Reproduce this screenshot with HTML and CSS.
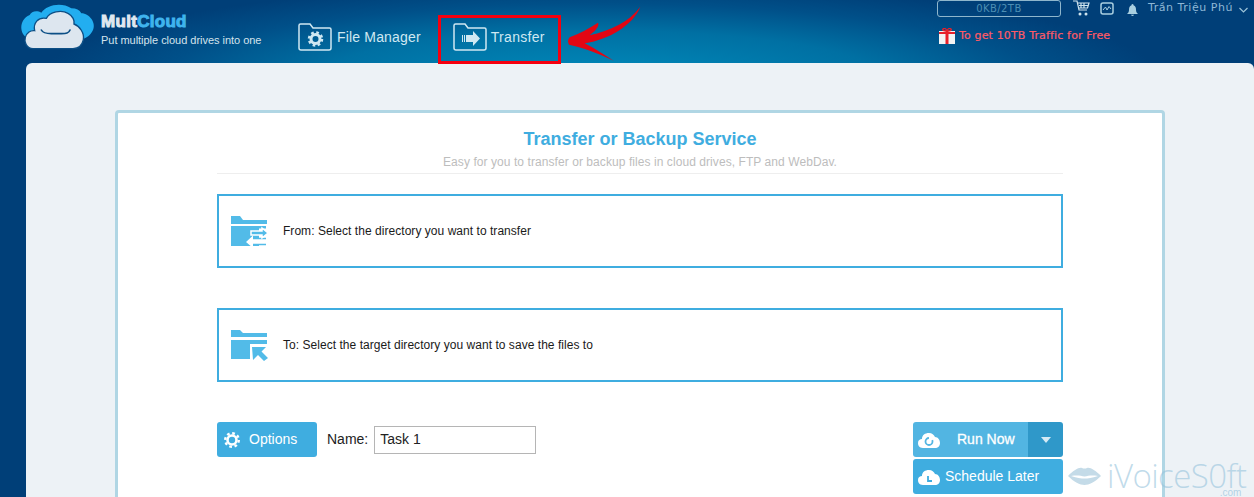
FILE: index.html
```html
<!DOCTYPE html>
<html lang="en">
<head>
    <meta charset="UTF-8">
    <meta name="viewport" content="width=device-width, initial-scale=1.0">
    <title>MultCloud Transfer</title>
    <link rel="stylesheet" href="styles.css">
</head>
<body>

<div class="header">
    <div class="logo">
        <svg class="logo-cloud" width="80" height="54" viewBox="0 0 240 162">
            <path d="M30 115 C5 105 0 60 35 45 C40 35 55 30 70 38 C85 15 130 5 160 25 C175 25 185 30 190 40 C215 40 235 70 225 90 C218 105 205 115 190 118 Z" fill="#22aef0"/>
            <path d="M45 146 C25 146 18 125 22 112 C26 98 38 90 50 92 C45 70 60 50 85 55 C95 35 130 28 150 40 C165 48 170 62 168 72 C185 78 200 100 196 120 C192 138 180 146 165 146 Z" fill="#dde6ef" stroke="#0c4f86" stroke-width="4"/>
            <path d="M70 90 C75 100 85 101 100 101 H130 C145 101 152 100 156 90" fill="none" stroke="#0c4f86" stroke-width="5" stroke-linecap="round"/>
        </svg>
        <div class="logo-text">
            <div class="logo-name">Mult<span class="logo-name-blue">Cloud</span></div>
            <div class="logo-slogan">Put multiple cloud drives into one</div>
        </div>
    </div>

    <div class="nav">
        <a class="nav-item">
            <svg width="34" height="28" viewBox="0 0 34 28">
                <path d="M1 25 V2.500 Q1 1 2.500 1 H12 L15 5 H31.500 Q33 5 33 6.500 V25 Q33 27 31 27 H3 Q1 27 1 25 Z" fill="none" stroke="#cfe8f2" stroke-width="1.500"/>
                <circle cx="17.500" cy="16" r="4.500" fill="none" stroke="#cfe8f2" stroke-width="3"/>
                <circle cx="17.500" cy="16" r="6.500" fill="none" stroke="#cfe8f2" stroke-width="2.500" stroke-dasharray="2.600 2.500"/>
            </svg>
            File Manager
        </a>
        <a class="nav-item nav-transfer">
            <svg width="34" height="28" viewBox="0 0 34 28">
                <path d="M1 25 V2.500 Q1 1 2.500 1 H12 L15 5 H31.500 Q33 5 33 6.500 V25 Q33 27 31 27 H3 Q1 27 1 25 Z" fill="none" stroke="#cfe8f2" stroke-width="1.500"/>
                <path d="M9 12 H10 V19 H9 Z M11 12 H12 V19 H11 Z M13 12 H20 V8 L27 15.500 L20 23 V19 H13 Z" fill="#cfe8f2"/>
            </svg>
            Transfer
        </a>
    </div>

    <div class="user-area">
        <div class="user-top">
            <div class="traffic">0KB/2TB</div>
            <svg class="cart" width="17" height="16" viewBox="0 0 17 16">
                <path d="M0 1 H4 L6 10 H14 M4.500 3 H16 L14.500 8 H5.500 M6 5.500 H15 M8 3 V8 M11 3 V8" fill="none" stroke="#cfe4ee" stroke-width="1.200"/>
                <circle cx="7" cy="14" r="1.500" fill="#cfe4ee"/>
                <circle cx="13" cy="14" r="1.500" fill="#cfe4ee"/>
            </svg>
            <svg class="stats" width="14" height="13" viewBox="0 0 14 13">
                <rect x="1" y="1" width="12" height="11" rx="2" fill="none" stroke="#a9cfe0" stroke-width="1.500"/>
                <path d="M3 8 L5.500 5 L7 8 L9 4.500 L11 7" fill="none" stroke="#a9cfe0" stroke-width="1"/>
            </svg>
            <svg class="bell" width="11" height="12" viewBox="0 0 11 12">
                <path d="M5.500 0 C6.500 0 6.500 1 6.500 1.200 C8.500 2 9 3.500 9 6 C9 8 10 9 11 10 H0 C1 9 2 8 2 6 C2 3.500 2.500 2 4.500 1.200 C4.500 1 4.500 0 5.500 0 Z M4 10.800 H7 C7 12.300 4 12.300 4 10.800 Z" fill="#a9cfe0"/>
            </svg>
            <span class="user-name">Trần Triệu Phú</span>
            <svg class="caret" width="9" height="6" viewBox="0 0 9 6">
                <path d="M.5 1 L4.500 5 L8.500 1" fill="none" stroke="#9cc4d8" stroke-width="1.200"/>
            </svg>
        </div>
        <div class="promo">
            <svg width="16" height="16" viewBox="0 0 16 16">
                <rect x="0" y="3" width="16" height="13" fill="#f3f3f3"/>
                <rect x="6.500" y="2" width="3" height="14" fill="#e8202a"/>
                <rect x="0" y="4" width="16" height="2" fill="#e8202a"/>
                <path d="M8 3 C4 3 3 2 4 1 C5 0 7 0 8 3 C9 0 11 0 12 1 C13 2 12 3 8 3 Z" fill="none" stroke="#e8202a" stroke-width="1.200"/>
            </svg>
            To get 10TB Traffic for Free
        </div>
    </div>
</div>

<div class="panel">
    <div class="card">
        <div class="card-head">
            <h1>Transfer or Backup Service</h1>
            <p>Easy for you to transfer or backup files in cloud drives, FTP and WebDav.</p>
        </div>

        <div class="dir-box">
            <svg width="37" height="30" viewBox="0 0 37 30">
                <path d="M0 0 H9 L12 4 H36 V8 H0 Z M0 10 H35 V12.500 H0 Z" fill="#52bbe8"/>
                <path d="M0 10 H28 V30 H0 Z" fill="#52bbe8"/>
                <path d="M15 26 L22 19.500 V22.500 H35 V28.500 H22 V32 Z" fill="#fff"/>
                <path d="M22 22.500 H35 M22 28.500 H35" fill="none" stroke="#52bbe8" stroke-width="1.500"/>
                <path d="M20 15 H31 V12 L37 17 L31 22 V19 H20 Z" fill="#52bbe8" stroke="#fff" stroke-width="1.500"/>
            </svg>
            <span>From: Select the directory you want to transfer</span>
        </div>

        <div class="dir-box">
            <svg width="37" height="31" viewBox="0 0 37 31">
                <path d="M0 0 H9 L12 3 H36 V7 H0 Z" fill="#52bbe8"/>
                <path d="M0 10 H36 V14 H19 V29 H0 Z" fill="#52bbe8"/>
                <path d="M21 17 H35 L30.500 21.500 L37 28 L33 31 L27 25 L22 30 Z" fill="#52bbe8"/>
            </svg>
            <span>To: Select the target directory you want to save the files to</span>
        </div>

        <div class="actions">
            <div class="actions-left">
                <button class="btn btn-options">
                    <svg width="16" height="16" viewBox="0 0 16 16">
                        <circle cx="8" cy="8" r="4.500" fill="none" stroke="#fff" stroke-width="2.600"/>
                        <circle cx="8" cy="8" r="6.800" fill="none" stroke="#fff" stroke-width="2.400" stroke-dasharray="2.700 2.640"/>
                    </svg>
                    Options
                </button>
                <label class="name-label" for="task-name">Name:</label>
                <input class="name-input" id="task-name" type="text" value="Task 1">
            </div>
            <div class="actions-right">
                <div class="run-group">
                    <button class="btn btn-run">
                        <svg width="22" height="16" viewBox="0 0 22 16">
                            <path d="M5 16 C1 16 0 13 0 11 C0 8 2 7 4 7 C4 3 7 1 11 1 C14 1 16 3 17 5 C20 5 22 8 22 11 C22 14 20 16 17 16 Z" fill="#fff"/>
                            <circle cx="11" cy="9.500" r="3.500" fill="none" stroke="#52b5e2" stroke-width="1.800" stroke-dasharray="16 4"/>
                        </svg>
                        <span class="run-label">Run Now</span>
                    </button>
                    <button class="btn-drop"><span class="drop-arrow"></span></button>
                </div>
                <button class="btn btn-schedule">
                    <svg width="22" height="16" viewBox="0 0 22 16">
                        <path d="M5 16 C1 16 0 13 0 11 C0 8 2 7 4 7 C4 3 7 1 11 1 C14 1 16 3 17 5 C20 5 22 8 22 11 C22 14 20 16 17 16 Z" fill="#fff"/>
                        <path d="M10 7 V12 H14" fill="none" stroke="#3fade0" stroke-width="1.800"/>
                    </svg>
                    Schedule Later
                </button>
            </div>
        </div>
    </div>
</div>

<!-- things drawn over the screenshot -->
<div class="callout"></div>
<svg class="callout-arrow" width="76" height="62" viewBox="835 0 228 186">
    <path d="M1052 20 C1030 75 960 118 885 130 C915 145 945 165 972 182 C930 162 880 142 838 134 C833 125 835 118 840 112 C870 100 900 85 925 68 C930 78 918 92 900 106 C960 92 1020 65 1052 20 Z" fill="#e30613"/>
</svg>
<div class="watermark">
    <svg width="33" height="18" viewBox="0 0 33 18">
        <path d="M0 9 C6 3 11 0 14 1 C15.500 1.800 17.500 1.800 19 1 C22 0 27 3 33 9 C27 15 21 18 16.500 18 C12 18 6 15 0 9 Z" fill="#c4dbe8"/>
        <path d="M3 9 C10 8 13 9 16.500 9.500 C20 9 23 8 30 9 C24 11 20 11.500 16.500 11.500 C13 11.500 9 11 3 9 Z" fill="#fff"/>
    </svg>
    <span class="wm-text">iVoiceS0ft</span>
    <span class="wm-com">.com</span>
</div>

</body>
</html>
```

FILE: styles.css
```css
* {
    box-sizing: border-box;
}

html, body {
    height: 100%;
}

body {
    margin: 0;
    height: 497px;
    overflow: hidden;
    position: relative;
    background-color: #003f78;
    font-family: 'Liberation Sans', Arial, sans-serif;
    font-size: 12px;
    color: #222;
}

.header {
    height: 63px;
    display: flex;
    background: radial-gradient(ellipse 560px 95px at 600px 78px, #008bbb 0%, #0070a3 50%, #005089 78%, #003f78 100%);
}

.logo {
    width: 298px;
    padding-left: 18px;
    display: flex;
}

.logo-cloud {
    flex: none;
}

.logo-text {
    margin-left: 3px;
    padding-top: 12px;
}

.logo-name {
    font-size: 17px;
    line-height: 20px;
    font-weight: bold;
    color: #dfe8f0;
    -webkit-text-stroke: 1px #dfe8f0;
    letter-spacing: .3px;
}

.logo-name-blue {
    color: #3fb4ee;
    -webkit-text-stroke: 1px #3fb4ee;
}

.logo-slogan {
    margin-top: 1px;
    font-size: 11px;
    line-height: 14px;
    color: #d5e3ec;
    letter-spacing: -.03px;
}

.nav {
    display: flex;
    padding-top: 23px;
}

.nav-item {
    display: flex;
    align-items: flex-start;
    gap: 5px;
    font-size: 14px;
    line-height: 28px;
    color: #cfe8f2;
    height: 28px;
    letter-spacing: .17px;
}

.nav-transfer {
    margin-left: 32px;
    gap: 4px;
    letter-spacing: .3px;
}

.user-area {
    position: absolute;
    top: 0;
    left: 937px;
    right: 0;
}

.user-top {
    display: flex;
    align-items: flex-start;
    height: 27px;
}

.traffic {
    width: 124px;
    height: 17px;
    border: 1px solid #8fb6cc;
    border-radius: 3px;
    text-align: center;
    line-height: 15px;
    letter-spacing: .4px;
    color: #4d8fb4;
    font-family: 'DejaVu Sans', sans-serif;
    font-size: 10px;
}

.cart {
    margin-left: 12px;
}

.stats {
    margin-left: 10px;
    margin-top: 2px;
}

.bell {
    margin-left: 13px;
    margin-top: 4px;
}

.user-name {
    margin-left: 10px;
    line-height: 15px;
    letter-spacing: .55px;
    color: #8fb8d6;
    white-space: nowrap;
    font-family: 'DejaVu Sans', sans-serif;
    font-size: 11px;
}

.caret {
    margin-left: 6px;
    margin-top: 7px;
}

.promo {
    display: flex;
    align-items: center;
    gap: 4px;
    margin-left: 2px;
    font-family: 'DejaVu Sans', sans-serif;
    font-size: 11px;
    line-height: 18px;
    letter-spacing: .15px;
    color: #ff5a66;
    -webkit-text-stroke: .2px #ff5a66;
    white-space: nowrap;
}

.panel {
    margin-left: 26px;
    height: 434px;
    padding: 47px 89px 0;
    background-color: #edf2f6;
    border-top-left-radius: 6px;
    border-top-right-radius: 6px;
}

.card {
    height: 400px;
    padding: 15px 99px 0;
    background-color: #fff;
    border: 3px solid #b0d6e4;
    border-radius: 4px;
}

.card-head {
    height: 46px;
    border-bottom: 1px solid #eee;
    text-align: center;
}

.card-head h1 {
    margin: 0;
    font-size: 18px;
    line-height: 22px;
    color: #3fade0;
}

.card-head p {
    margin: 5px 0 0;
    font-size: 12px;
    line-height: 15px;
    letter-spacing: .07px;
    color: #bdbdbd;
}

.dir-box {
    height: 74px;
    margin-top: 20px;
    margin-bottom: 40px;
    padding-left: 12px;
    display: flex;
    align-items: center;
    gap: 15px;
    border: 2px solid #3fade0;
    background-color: #fff;
    color: #1a1a1a;
    letter-spacing: .04px;
}

.dir-box + .dir-box {
    margin-top: 0;
}

.actions {
    display: flex;
    justify-content: space-between;
}

.actions-left {
    display: flex;
    align-items: center;
    height: 35px;
}

.btn {
    display: flex;
    align-items: center;
    border: none;
    border-radius: 3px;
    background-color: #3fade0;
    color: #fff;
    font-family: inherit;
    font-size: 14px;
    padding-bottom: 2px;
}

.btn svg {
    margin-top: 2px;
}

.btn-options {
    width: 100px;
    height: 35px;
    padding-left: 7px;
    gap: 9px;
}

.name-label {
    margin-left: 10px;
    font-size: 14px;
    color: #222;
    padding-bottom: 2px;
}

.name-input {
    width: 162px;
    height: 28px;
    margin-left: 6px;
    padding: 0 5px 2px;
    border: 1px solid #b5b5b5;
    font-family: inherit;
    font-size: 14px;
    color: #222;
}

.actions-right {
    width: 150px;
}

.run-group {
    display: flex;
    height: 35px;
}

.btn-run {
    width: 115px;
    padding-left: 5px;
    background-color: #52b5e2;
    border-radius: 3px 0 0 3px;
}

.run-label {
    margin-left: 17px;
    -webkit-text-stroke: .3px #fff;
}

.btn-drop {
    width: 35px;
    border: none;
    border-radius: 0 3px 3px 0;
    background-color: #2f98c9;
    display: flex;
    align-items: center;
    justify-content: center;
}

.drop-arrow {
    width: 0;
    height: 0;
    border-left: 5px solid transparent;
    border-right: 5px solid transparent;
    border-top: 6px solid #d5eaf5;
}

.btn-schedule {
    width: 150px;
    height: 35px;
    margin-top: 2px;
    padding-left: 5px;
    gap: 5px;
}

.callout {
    position: absolute;
    left: 438px;
    top: 15px;
    width: 123px;
    height: 49px;
    border: 3px solid #f5000f;
}

.callout-arrow {
    position: absolute;
    left: 568px;
    top: 0;
}

.watermark {
    position: absolute;
    left: 1068px;
    top: 461px;
    display: flex;
    align-items: center;
    gap: 6px;
    height: 30px;
}

.wm-text {
    font-family: 'Open Sans', sans-serif;
    font-weight: 300;
    font-size: 33px;
    line-height: 30px;
    letter-spacing: -.55px;
    color: rgba(150, 195, 220, .6);
}

.wm-com {
    position: absolute;
    right: 5px;
    top: 27px;
    font-size: 10px;
    line-height: 10px;
    color: rgba(150, 195, 220, .7);
}
```
